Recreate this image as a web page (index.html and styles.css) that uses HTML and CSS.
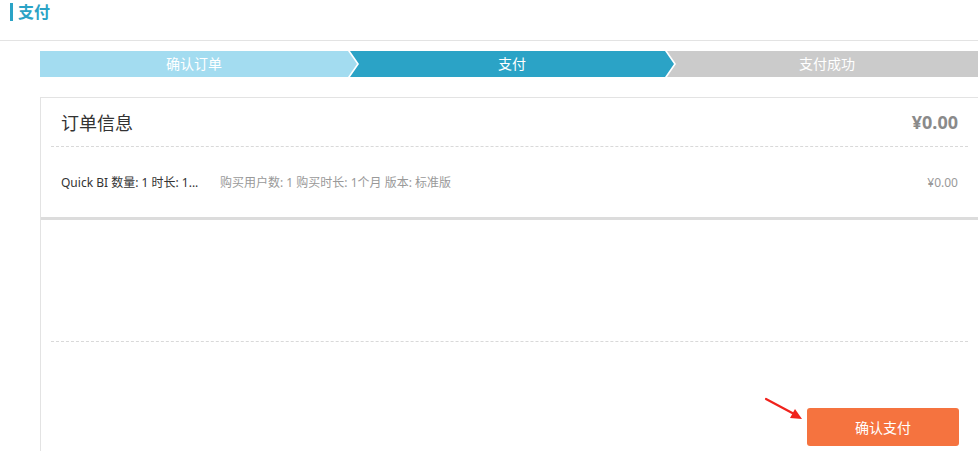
FILE: index.html
```html
<!DOCTYPE html>
<html lang="zh-CN">
<head>
<meta charset="utf-8">
<title>支付</title>
<link rel="stylesheet" href="styles.css">
</head>
<body>
<header class="page-header">
  <h1 class="page-title">支付</h1>
</header>
<div class="steps">
  <div class="step step-done">确认订单</div>
  <div class="step step-active">支付</div>
  <div class="step step-todo">支付成功</div>
</div>
<section class="card">
  <div class="card-head">
    <h2 class="card-title">订单信息</h2>
    <span class="card-total">¥0.00</span>
  </div>
  <div class="order-row">
    <span class="order-name">Quick BI 数量: 1 时长: 1...</span>
    <span class="order-desc">购买用户数: 1 购买时长: 1个月 版本: 标准版</span>
    <span class="order-price">¥0.00</span>
  </div>
  <div class="card-body"></div>
  <div class="card-foot">
    <svg class="pointer" width="44" height="26" viewBox="0 0 44 26">
      <line x1="2" y1="2" x2="32" y2="18" stroke="#f0221c" stroke-width="2.2" stroke-linecap="round"/>
      <polygon points="38,22 26,21 31,12" fill="#f0221c"/>
    </svg>
    <button class="pay-btn">确认支付</button>
  </div>
</section>
</body>
</html>
```
FILE: styles.css
```css
html, body {
  margin: 0;
  padding: 0;
  overflow: hidden;
  background: #fff;
}
body {
  font-family: "Noto Sans", "Noto Sans CJK SC", sans-serif;
  color: #333;
  width: 978px;
  height: 451px;
}
.page-header {
  height: 41px;
  border-bottom: 1px solid #e3e3e3;
  box-sizing: border-box;
  padding: 3px 0 0 10px;
}
.page-title {
  margin: 0;
  font-size: 16px;
  line-height: 20px;
  font-weight: bold;
  color: #2ba3c6;
  border-left: 3px solid #2ba3c6;
  padding-left: 5px;
  height: 18px;
  display: flex;
  align-items: center;
}
.steps {
  display: flex;
  margin: 10px 0 0 40px;
  width: 947px;
  height: 26px;
}
.step {
  height: 26px;
  line-height: 26px;
  color: #fff;
  font-size: 14px;
  text-align: center;
  flex: none;
  box-sizing: border-box;
}
.step-done {
  width: 317px;
  padding-right: 9px;
  background: #a3dcf0;
  clip-path: polygon(0 0, calc(100% - 9px) 0, 100% 50%, calc(100% - 9px) 100%, 0 100%);
}
.step-active {
  width: 324px;
  margin-left: -7px;
  background: #2ba3c6;
  clip-path: polygon(0 0, calc(100% - 9px) 0, 100% 50%, calc(100% - 9px) 100%, 0 100%, 9px 50%);
}
.step-todo {
  flex: 1;
  margin-left: -7px;
  background: #cbcbcb;
  clip-path: polygon(0 0, 100% 0, 100% 100%, 0 100%, 9px 50%);
}
.card {
  margin: 20px 0 0 40px;
  width: 939px;
  height: 360px;
  box-sizing: border-box;
  border: 1px solid #e3e3e3;
  border-bottom: none;
  display: flex;
  flex-direction: column;
}
.card-head {
  height: 48px;
  margin: 0 10px;
  padding: 0 10px;
  border-bottom: 1px dashed #d9d9d9;
  display: flex;
  align-items: center;
  justify-content: space-between;
}
.card-title {
  margin: 0;
  font-size: 18px;
  font-weight: normal;
  color: #333;
}
.card-total {
  font-size: 18px;
  font-weight: bold;
  color: #8a8a8a;
}
.order-row {
  height: 70px;
  padding: 0 20px;
  border-bottom: 3px solid #dcdcdc;
  display: flex;
  align-items: center;
  font-size: 12px;
}
.order-name {
  width: 159px;
  white-space: nowrap;
  color: #333;
}
.order-desc {
  flex: 1;
  color: #999;
}
.order-price {
  color: #999;
}
.card-body {
  height: 121px;
  margin: 0 10px;
  border-bottom: 1px dashed #d9d9d9;
}
.card-foot {
  position: relative;
  display: flex;
  justify-content: flex-end;
  padding: 66px 19px 0 0;
}
.pointer {
  position: absolute;
  left: 723px;
  top: 55px;
}
.pay-btn {
  width: 152px;
  height: 38px;
  border: none;
  border-radius: 3px;
  background: #f5733f;
  color: #fff;
  font-family: "Noto Sans", "Noto Sans CJK SC", sans-serif;
  font-size: 14px;
  padding: 0;
}
```
